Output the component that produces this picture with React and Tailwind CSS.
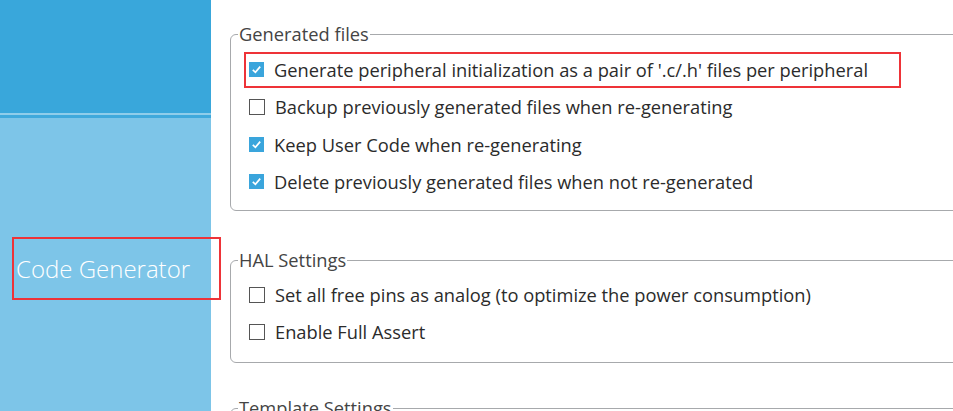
import React from 'react';

const Box = ({ checked }) => (
    checked ? (
        <span className="w-[15px] h-[15px] bg-[#3aa5dc] flex items-center justify-center shrink-0">
            <svg width="11" height="11" viewBox="0 0 11 11">
                <path d="M1.8 5.8 L4.4 8.3 L9.2 2.6" stroke="#ffffff" strokeWidth="1.7" fill="none" />
            </svg>
        </span>
    ) : (
        <span className="w-[16px] h-[16px] border border-[#555555] bg-white shrink-0" />
    )
);

const Row = ({ checked, label, highlight }) => (
    <div className="h-[37.3px] flex items-center">
        <div className={`flex items-center gap-[10px] h-[34px] pl-[4px] pr-[32px] ${highlight ? 'outline-2 outline-[#ee3338] -outline-offset-1' : ''}`}>
            <Box checked={checked} />
            <span>{label}</span>
        </div>
    </div>
);

const Group = ({ title, children, className }) => (
    <fieldset className={`border border-[#a7a9ac] rounded-[6px] w-[760px] pl-[14px] ${className}`}>
        <legend className="-ml-[7px] px-[1px] text-[#444444] leading-[20px]">{title}</legend>
        {children}
    </fieldset>
);

export default function App() {
    return (
        <div className="w-[953px] h-[411px] flex overflow-hidden bg-white text-[18.3px] text-[#2b2b2b]" style={{ fontFamily: '"Open Sans", "Liberation Sans", sans-serif' }}>
            <div className="w-[211px] shrink-0 flex flex-col">
                <div className="h-[113px] bg-[#39a7db]" />
                <div className="h-[2px] bg-[#8fcdea]" />
                <div className="h-[3px] bg-[#3fa9dc]" />
                <div className="flex-1 bg-[#7dc5e8] pt-[119px] pl-[12px]">
                    <div className="w-[209px] h-[63px] border-2 border-[#ee3338] flex items-center pl-[2px] text-white text-[24px] font-light">
                        Code Generator
                    </div>
                </div>
            </div>
            <div className="flex-1 overflow-hidden pl-[19px] pt-[24px]">
                <Group title="Generated files" className="h-[187px] pt-[7px]">
                    <Row checked highlight label="Generate peripheral initialization as a pair of '.c/.h' files per peripheral" />
                    <Row label="Backup previously generated files when re-generating" />
                    <Row checked label="Keep User Code when re-generating" />
                    <Row checked label="Delete previously generated files when not re-generated" />
                </Group>
                <Group title="HAL Settings" className="mt-[39px] h-[113px] pt-[6px]">
                    <Row label="Set all free pins as analog (to optimize the power consumption)" />
                    <Row label="Enable Full Assert" />
                </Group>
                <Group title="Template Settings" className="mt-[35px] h-[80px]" />
            </div>
        </div>
    );
}
